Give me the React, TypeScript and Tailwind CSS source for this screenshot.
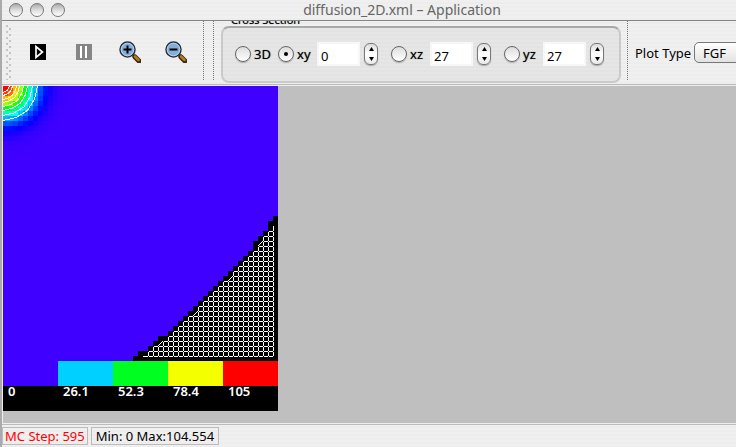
import { useState } from "react";
import type { ReactNode } from "react";

const CELL = 5;
const SIZE = 55;

// First masked column of each row, from row 26 down to row 54.
const FIRST_ROW = 26;
const MASK_START = [
  54, 53, 53, 52, 51, 50, 50, 49, 48, 47, 46, 45, 44, 43, 42, 41, 40, 39, 38, 37, 36, 35, 34, 33, 31, 30, 29, 27, 26,
];
// Corners of the mesh that are cut off by a diagonal.
const CUTS = [[51, 31], [45, 38], [38, 45], [31, 51]];
const CONTOUR_RADII = [6, 9, 13, 16, 20, 24, 29, 34];

const LEGEND = [
  { label: "0", swatch: "bg-[#4000ff]" },
  { label: "26.1", swatch: "bg-[#00d0ff]" },
  { label: "52.3", swatch: "bg-[#00ff20]" },
  { label: "78.4", swatch: "bg-[#f4ff00]" },
  { label: "105", swatch: "bg-[#ff0000]" },
];

function heatCells() {
  const cells: ReactNode[] = [];
  for (let r = 0; r < 14; r++) {
    for (let c = 0; c < 14; c++) {
      const x = c * CELL + 1;
      const y = r * CELL + 1;
      const share = Math.exp(-(x * x + y * y) / 657);
      cells.push(
        <rect key={`${r}-${c}`} x={c * CELL} y={r * CELL} width={CELL} height={CELL} fill={`hsl(${255 * (1 - share)} 100% 50%)`} />,
      );
    }
  }
  return cells;
}

function meshPath() {
  let d = "";
  const isCut = (c: number, r: number) => CUTS.some(([a, b]) => a === c && b === r);
  const firstVertex = (r: number) => (r === 54 ? 28 : Math.max(MASK_START[r - 1 - FIRST_ROW], MASK_START[r - FIRST_ROW] + 1));
  for (let r = 29; r <= 54; r++) {
    let start = firstVertex(r);
    if (isCut(start, r)) start += 1;
    d += `M${start * CELL} ${r * CELL}H271v1H${start * CELL}z`;
  }
  for (let c = 29; c <= 54; c++) {
    let r = 28;
    while (r < 54 && firstVertex(r) > c) r++;
    if (isCut(c, r)) r += 1;
    d += `M${c * CELL} ${r * CELL}V271h1V${r * CELL}z`;
  }
  return d;
}

function Plot() {
  return (
    <svg width={SIZE * CELL} height={SIZE * CELL} viewBox="0 0 275 275" shapeRendering="crispEdges" className="block" role="img" aria-label="Diffusion field">
      <rect width="275" height="275" fill="#4000ff" />
      {heatCells()}
      <g fill="none" stroke="#fff">
        {CONTOUR_RADII.map((q) => (
          <path key={q} d={`M${q + 0.5} 0L${q * 0.93} ${q * 0.38}L${q * 0.72} ${q * 0.72}L${q * 0.38} ${q * 0.93}L0 ${q + 0.5}`} />
        ))}
      </g>
      {MASK_START.map((c, i) => (
        <rect key={i} x={c * CELL} y={(FIRST_ROW + i) * CELL} width={(SIZE - c) * CELL} height={CELL} />
      ))}
      <path d={meshPath()} fill="#fff" />
      {CUTS.map(([c, r]) => (
        <path key={c} d={`M${c * CELL} ${(r + 1) * CELL}L${(c + 1) * CELL} ${r * CELL}`} stroke="#fff" />
      ))}
    </svg>
  );
}

function Magnifier({ plus }: { plus?: boolean }) {
  return (
    <svg width="22" height="22" viewBox="0 0 22 22" className="block">
      <path d="M14 14l2 2" stroke="#333" strokeWidth="3" />
      <path d="M16 16l4 4" stroke="#3a2a10" strokeWidth="5" strokeLinecap="round" />
      <path d="M16 15.500l3.500 3.500" stroke="#b57d1c" strokeWidth="2.500" strokeLinecap="round" />
      <circle cx="8.500" cy="8.500" r="7.500" fill="#86acd8" stroke="#26303c" strokeWidth="1.500" />
      <circle cx="8.500" cy="8.500" r="6.300" fill="none" stroke="#b9d0ea" />
      <path d={plus ? "M4.500 8.500h8M8.500 4.500v8" : "M4.500 8.500h8"} stroke="#000" strokeWidth="2" />
    </svg>
  );
}

function PlaneOption({ label, checked, onSelect }: { label: string; checked: boolean; onSelect: () => void }) {
  return (
    <label className="flex items-center gap-[3px] [text-shadow:0_0_1px_#666]">
      <input
        type="radio"
        name="plane"
        checked={checked}
        onChange={onSelect}
        className="grid size-4 shrink-0 appearance-none place-items-center rounded-full border border-[#666] bg-linear-to-b from-[#ddd] to-white shadow-[0_1px_1px_#aaa] before:size-1 before:rounded-full checked:before:bg-black"
      />
      {label}
    </label>
  );
}

function Spinner({ label, initial }: { label: string; initial: number }) {
  const [value, setValue] = useState(initial);
  return (
    <div className="flex h-6 items-center gap-1">
      <input
        aria-label={label}
        value={value}
        onChange={(e) => setValue(Number(e.target.value) || 0)}
        className="h-6 w-[43px] border-2 border-[#f7f7f7] bg-white pt-[3px] pl-[2px] text-[13px] outline-none"
      />
      <div className="flex h-[22px] w-[14px] flex-col rounded-[6px] border border-[#777] bg-linear-to-b from-[#ddd] via-white to-[#e8e8e8] shadow-[0_1px_1px_#aaa]">
        <button type="button" aria-label={`Increase ${label}`} onClick={() => setValue(value + 1)} className="flex flex-1 items-center justify-center">
          <svg width="5" height="4" viewBox="0 0 5 4"><path d="M2.500 0L5 4H0z" /></svg>
        </button>
        <button type="button" aria-label={`Decrease ${label}`} onClick={() => setValue(value - 1)} className="flex flex-1 items-center justify-center">
          <svg width="5" height="4" viewBox="0 0 5 4"><path d="M2.500 4L5 0H0z" /></svg>
        </button>
      </div>
    </div>
  );
}

export default function App() {
  const [plane, setPlane] = useState("xy");
  return (
    <div className="flex h-screen flex-col overflow-hidden border-l-2 border-[#aaa] bg-[repeating-linear-gradient(#f0f0f0_0_2px,#ededed_2px_4px)] font-['Noto_Sans','Open_Sans',sans-serif] text-[13px] leading-4 text-black">
      <header className="grid h-[21px] shrink-0 grid-cols-[80px_1fr_14px] items-center border-b border-[#858585]">
        <div className="flex gap-[7px] pl-[7px]">
          {["Close", "Minimize", "Zoom"].map((name) => (
            <button key={name} type="button" aria-label={name} className="size-[14px] rounded-full border border-[#777] bg-linear-to-b from-[#aaa] via-[#ddd] to-white" />
          ))}
        </div>
        <h1 className="text-center text-[14px] text-[#666]">diffusion_2D.xml – Application</h1>
      </header>

      <div className="flex h-[64px] shrink-0 overflow-hidden border-b border-[#bbb]">
        <div className="my-1 ml-1 w-[5px] shrink-0 bg-[radial-gradient(circle_at_1px_1px,#c4c4c4_1px,transparent_1px),radial-gradient(circle_at_4px_4px,#c4c4c4_1px,transparent_1px)] bg-size-[5px_6px]" />
        <div className="flex w-[192px] shrink-0 items-center pb-[2px] pl-[19px]">
          <button type="button" aria-label="Run" className="mr-[30px] size-4 shrink-0 bg-black">
            <svg width="16" height="16" viewBox="0 0 16 16"><path d="M6 2.500v11l6.500-5.500z" fill="none" stroke="#fff" strokeWidth="1.700" /></svg>
          </button>
          <button type="button" aria-label="Pause" className="mr-[27px] size-4 shrink-0 bg-[#858585]">
            <svg width="16" height="16" viewBox="0 0 16 16"><path d="M5 2v12M10 2v12" stroke="#fff" strokeWidth="2" /></svg>
          </button>
          <button type="button" aria-label="Zoom in" className="mr-6 shrink-0"><Magnifier plus /></button>
          <button type="button" aria-label="Zoom out" className="shrink-0"><Magnifier /></button>
        </div>
        <div className="mb-1 w-[11px] shrink-0 border-x border-dotted border-[#777]" />
        <fieldset className="flex w-[413px] shrink-0 flex-col pr-[6px] pl-[7px]">
          <div className="-mt-2 h-[13px] shrink-0 pl-[10px] text-[11px] leading-[13px] [text-shadow:0_0_1px_#666]">Cross Section</div>
          <div className="flex h-[57px] shrink-0 items-center rounded-lg border-2 border-[#cacaca] border-t-[#a8a8a8] bg-[repeating-linear-gradient(#e6e6e6_0_2px,#e3e3e3_2px_4px)] pb-px pl-3">
            <div className="w-[43px] shrink-0"><PlaneOption label="3D" checked={plane === "3D"} onSelect={() => setPlane("3D")} /></div>
            <div className="w-[39px] shrink-0"><PlaneOption label="xy" checked={plane === "xy"} onSelect={() => setPlane("xy")} /></div>
            <div className="w-[74px] shrink-0"><Spinner label="xy slice" initial={0} /></div>
            <div className="w-[39px] shrink-0"><PlaneOption label="xz" checked={plane === "xz"} onSelect={() => setPlane("xz")} /></div>
            <div className="w-[74px] shrink-0"><Spinner label="xz slice" initial={27} /></div>
            <div className="w-[39px] shrink-0"><PlaneOption label="yz" checked={plane === "yz"} onSelect={() => setPlane("yz")} /></div>
            <Spinner label="yz slice" initial={27} />
          </div>
        </fieldset>
        <div className="mb-1 w-px shrink-0 border-l border-dotted border-[#777]" />
        <label className="flex shrink-0 items-center gap-[3px] pl-[7px]">
          Plot Type
          <select defaultValue="FGF" className="h-[21px] w-[100px] appearance-none rounded-[5px] border border-[#777] bg-linear-to-b from-white to-[#e2e2e2] pl-2 text-[13px]">
            <option>FGF</option>
            <option>Contour</option>
          </select>
        </label>
      </div>

      <main className="min-h-0 flex-1 overflow-hidden border-y border-l border-[#eee] bg-[#bfbfbf]">
        <div className="w-[275px]">
          <Plot />
          <ul className="grid grid-cols-5 bg-black">
            {LEGEND.map(({ label, swatch }) => (
              <li key={label} className="h-[50px] font-semibold text-white">
                <div className={`h-[25px] ${swatch}`} />
                <span className="block pl-[5px] leading-[11px]">{label}</span>
              </li>
            ))}
          </ul>
        </div>
      </main>
      <footer className="flex h-[23px] shrink-0 items-center gap-[3px] border-t border-[#bbb]">
        <p className="h-[18px] border border-[#bbb] px-[2px] leading-4 text-[#f00]">MC Step: 595</p>
        <p className="h-[18px] border border-[#bbb] px-1 leading-4">Min: 0 Max:104.554</p>
      </footer>
    </div>
  );
}
